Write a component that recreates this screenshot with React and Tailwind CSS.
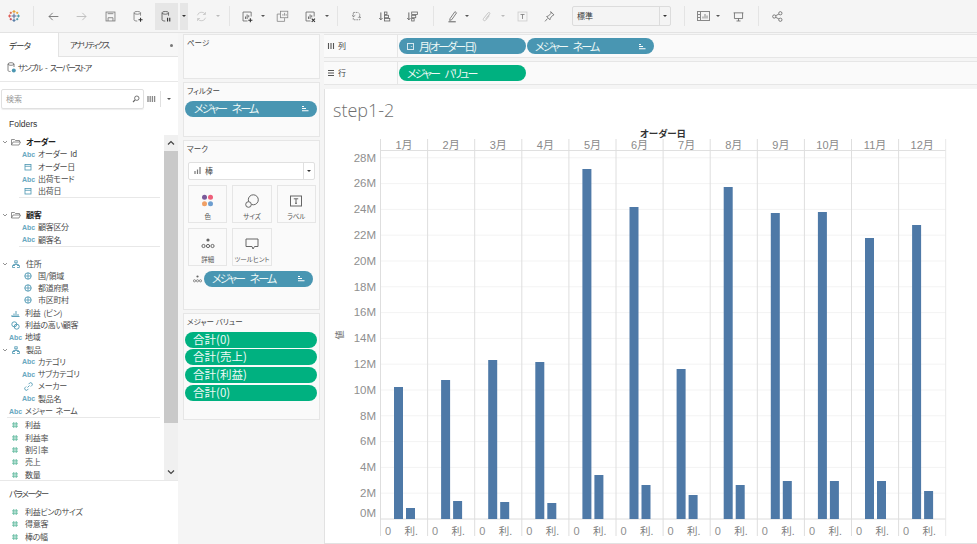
import React from "react";

const JP = "font-['Noto_Sans_CJK_JP','Liberation_Sans',sans-serif] [font-feature-settings:'palt']";

const S = ({ w, h, children }) => (
  <svg
    width={w || 13}
    height={h || 13}
    viewBox={`0 0 ${w || 16} ${h || 16}`}
    fill="none"
    stroke="currentColor"
    strokeWidth="1"
    className="shrink-0"
  >
    {children}
  </svg>
);

function Logo() {
  const cross = (x, y, r, c, k) => (
    <path key={k} d={`M${x - r} ${y}H${x + r}M${x} ${y - r}V${y + r}`} stroke={c} strokeWidth="1.1" />
  );
  return (
    <S w={12} h={12}>
      {cross(6, 6, 2.4, "#5b6f9a", 0)}
      {cross(6, 1.6, 1.5, "#e8a33b", 1)}
      {cross(6, 10.4, 1.5, "#5b7fa8", 2)}
      {cross(1.6, 6, 1.5, "#e0574f", 3)}
      {cross(10.4, 6, 1.5, "#4e9aa8", 4)}
      {cross(2.8, 2.8, 1.1, "#d9694f", 5)}
      {cross(9.2, 2.8, 1.1, "#e8a33b", 6)}
      {cross(2.8, 9.2, 1.1, "#c34b5e", 7)}
      {cross(9.2, 9.2, 1.1, "#4e9aa8", 8)}
    </S>
  );
}

const Cyl = ({ children }) => (
  <S>
    <ellipse cx="6.5" cy="3.5" rx="4" ry="1.7" />
    <path d="M2.5 3.5V12c0 1 1.6 1.6 4 1.6M10.5 3.5V7" />
    {children}
  </S>
);
const SheetBars = ({ children }) => (
  <S>
    <path d="M2.5 2.5H12.5V8M2.5 2.5V13.5H8" />
    <path d="M5.5 11V8M7.5 11V5.5M9.5 9V6.5" strokeWidth="1.2" />
    {children}
  </S>
);

const Dd = ({ c = "text-[#555]" }) => <span className={`block h-0 w-0 border-x-[2px] border-t-[2.5px] border-x-transparent border-t-current ${c}`} />;

const T = ({ className, children }) => <div className={`flex h-full shrink-0 items-center justify-center ${className}`}>{children}</div>;
const Sep = ({ className }) => (
  <T className={className}>
    <span className="h-[20px] w-px bg-[#e4e4e4]" />
  </T>
);

function Toolbar() {
  return (
    <div className="flex h-[33px] shrink-0 items-center border-b border-[#e3e3e3] bg-[#f5f5f5] text-[#666]">
      <T className="w-[28px]"><Logo /></T>
      <Sep className="w-[11px]" />
      <T className="w-[28px]">
        <S><path d="M14 8H2.5M7 3.5 2.5 8 7 12.5" /></S>
      </T>
      <T className="w-[29px] text-[#b5b5b5]">
        <S><path d="M2 8h11.5M9 3.5 13.5 8 9 12.5" /></S>
      </T>
      <T className="w-[28px] text-[#777]">
        <S><rect x="2.5" y="2.5" width="11" height="11" /><path d="M5 13.5V9.5h6v4M4.5 4.5h7" /></S>
      </T>
      <T className="w-[28px] text-[#777]">
        <Cyl><path d="M10.5 9.5v5M8 12h5" stroke="#333" strokeWidth="1.3" /></Cyl>
      </T>
      <T className="w-[28px]">
        <div className="flex h-[27px] w-[23px] items-center justify-center bg-[#e6e6e6] text-[#555]">
          <Cyl><path d="M9.3 9.5v4.5M12 9.5v4.5" stroke="#333" strokeWidth="1.4" /></Cyl>
        </div>
      </T>
      <T className="w-[8px]">
        <div className="flex h-[27px] w-[8px] items-center justify-center bg-[#e6e6e6]"><Dd c="text-[#333]" /></div>
      </T>
      <T className="w-[26px] text-[#c4c4c4]">
        <S><path d="M3 6.5a5.3 5.3 0 0 1 9.6-1.3M13 9.5a5.3 5.3 0 0 1-9.6 1.3M12.8 2.5v3h-3M3.2 13.5v-3h3" /></S>
      </T>
      <T className="w-[8px]"><Dd c="text-[#bbb]" /></T>
      <Sep className="w-[14px]" />
      <T className="w-[22px]">
        <SheetBars><path d="M11.5 10v5M9 12.5h5" stroke="#333" strokeWidth="1.3" /></SheetBars>
      </T>
      <T className="w-[10px]"><Dd /></T>
      <T className="w-[28px] text-[#888]">
        <S><rect x="5.5" y="1.5" width="9" height="8" /><path d="M5.5 5H1.5v9h9v-4" /><path d="M8.5 7V5M10.5 7V3.5M12.5 7V5" /></S>
      </T>
      <T className="w-[28px]">
        <SheetBars><path d="m9.5 10.5 4 4M13.5 10.5l-4 4" stroke="#333" strokeWidth="1.3" /></SheetBars>
      </T>
      <T className="w-[6px]"><Dd /></T>
      <Sep className="w-[14px]" />
      <T className="w-[24px] text-[#777]">
        <S><path d="M4 3H10l2 2v7H4z" strokeDasharray="2 1" /><path d="M2.5 6.5 4.5 8l2-1.5M13.5 9.5l-2-1.5-1.5 1.5" /></S>
      </T>
      <T className="w-[32px]">
        <S><path d="M3.5 3v9M1.5 10l2 2 2-2" strokeWidth="1.2" /><rect x="8" y="2.5" width="3" height="3" /><rect x="8" y="6.5" width="5" height="3" /><rect x="8" y="10.5" width="6.5" height="3" /></S>
      </T>
      <T className="w-[24px]">
        <S><path d="M3.5 3v9M1.5 10l2 2 2-2" strokeWidth="1.2" /><rect x="7" y="2.5" width="7" height="3" /><rect x="7" y="6.5" width="5" height="3" /><rect x="7" y="10.5" width="3" height="3" /></S>
      </T>
      <Sep className="w-[18px]" />
      <T className="w-[20px]">
        <S><path d="M5 10.5 11 2l2 1.5-6 8.5-2.5.8z" /><path d="M3 14.5h9" strokeWidth="1.3" /></S>
      </T>
      <T className="w-[10px]"><Dd /></T>
      <T className="w-[28px] text-[#c4c4c4]">
        <S><path d="M11.5 7 7 12.5c-1.5 1.7-4 0-2.700-2L10 3.5c1-1.200 2.800 0 2 1.300L7 11" strokeWidth="1.2" /></S>
      </T>
      <T className="w-[6px]"><Dd c="text-[#bbb]" /></T>
      <T className="w-[32px] text-[#777]">
        <S><rect x="2.5" y="2.5" width="11" height="11" stroke="#ccc" /><path d="M5.5 5.500h5M8 5.500v5.500" /></S>
      </T>
      <T className="w-[22px]">
        <S><path d="M9.5 2 13.5 6l-1.500.5L9 10l-.5 2-4-4 2-.5L10 4z" /><path d="m5.500 10.500-3 3.500" /></S>
      </T>
      <div className="ml-[12px] flex h-[20px] w-[99px] shrink-0 items-center rounded-[2px] border border-[#dcdcdc] bg-[#f4f4f4]">
        <span className={`flex-1 pl-[4px] text-[8px] text-[#333] ${JP}`}>標準</span>
        <span className="flex h-full w-[11px] items-center justify-center border-l border-[#dcdcdc]"><Dd c="text-[#333]" /></span>
      </div>
      <Sep className="w-[26px]" />
      <T className="w-[12px] text-[#888]">
        <S w={13} h={10}><rect x=".5" y=".5" width="12" height="9" /><path d="M3.5.5v9M.5 3.5h3M.5 6.5h3M6 7.5V5.500M8 7.500V3M10 7.500V4.500" /></S>
      </T>
      <T className="w-[18px]"><Dd /></T>
      <T className="w-[22px]">
        <S><path d="M2 3.5h12M3 3.5v7h10v-7M8 10.500v3M5.500 13.500h5" /></S>
      </T>
      <Sep className="w-[18px]" />
      <T className="w-[20px]">
        <S><circle cx="4" cy="8" r="2" /><circle cx="11.500" cy="4" r="2" /><circle cx="11.500" cy="12" r="2" /><path d="m5.800 7 3.900-2M5.800 9l3.900 2" /></S>
      </T>
    </div>
  );
}

const Abc = () => <span className="w-[12px] text-center font-['Liberation_Sans',sans-serif] text-[7px] font-bold leading-none text-[#6aa8bf]">Abc</span>;
const Cal = () => (
  <span className="flex w-[12px] justify-center text-[#4b96b1]">
    <S w={8} h={8}><rect x="1" y="1.5" width="6" height="5.5" strokeWidth=".8" /><path d="M1 3.300h6" strokeWidth=".8" /></S>
  </span>
);
const Globe = () => (
  <span className="flex w-[12px] justify-center text-[#4b96b1]">
    <S w={8} h={8}><circle cx="4" cy="4" r="3.2" strokeWidth=".9" /><path d="M.8 4h6.400M4 .8v6.400" strokeWidth=".8" /></S>
  </span>
);
const Hash = () => (
  <span className="flex w-[12px] justify-center text-[#5cb89c]">
    <S w={8} h={8}><path d="M2.800 1v6M5.200 1v6M1 2.900h6M1 5.200h6" strokeWidth=".9" /></S>
  </span>
);
const Hier = () => (
  <span className="flex w-[12px] justify-center text-[#4b96b1]">
    <S w={8} h={8}><rect x="2.8" y=".8" width="2.4" height="2" strokeWidth=".8" /><path d="M4 3v1.500M1.500 6V4.500h5V6" strokeWidth=".8" /><rect x=".6" y="5.6" width="2" height="1.8" strokeWidth=".8" /><rect x="5.4" y="5.6" width="2" height="1.8" strokeWidth=".8" /></S>
  </span>
);
const Folder = () => (
  <span className="flex w-[12px] justify-center text-[#777]">
    <S w={10} h={8}><path d="M.5 7V1.500h3l1 1h4V4M.5 7l1.500-3h7.500L8 7z" strokeWidth=".8" /></S>
  </span>
);
const Hist = () => (
  <span className="flex w-[12px] justify-center text-[#4b96b1]">
    <S w={9} h={8}><path d="M1 7V6M3 7V4.500M5 7V2M7 7V5M.5 7.500h8" strokeWidth=".9" /></S>
  </span>
);
const Venn = () => (
  <span className="flex w-[12px] justify-center text-[#4b96b1]">
    <S w={9} h={9}><circle cx="3.3" cy="3.3" r="2.5" strokeWidth=".9" /><circle cx="5.7" cy="5.7" r="2.5" strokeWidth=".9" /></S>
  </span>
);
const LinkI = () => (
  <span className="flex w-[12px] justify-center text-[#4b96b1]">
    <S w={9} h={9}><path d="M3.500 5.500 5.500 3.500M4.500 2.200l1-1a1.600 1.600 0 0 1 2.300 2.300l-1 1M4.500 6.800l-1 1a1.600 1.600 0 0 1-2.300-2.300l1-1" strokeWidth=".9" /></S>
  </span>
);

const Row = ({ level = 1, chev, icon, bold, children }) => (
  <div className={`flex h-[12.3px] items-center ${level === 1 ? "pl-[22px]" : chev ? "pl-[2px]" : "pl-[9px]"}`}>
    {chev && (
      <span className="mr-[1px] flex w-[6px] justify-center text-[#777]">
        <S w={6} h={6}><path d="m1 2 2 2 2-2" strokeWidth=".8" /></S>
      </span>
    )}
    {level !== 1 && chev ? <span className="w-[1px]" /> : null}
    {icon}
    <span className={`ml-[4px] whitespace-nowrap text-[8px] leading-none tracking-[-0.3px] [word-spacing:1.5px] ${bold ? "font-bold text-[#222]" : "text-[#4a4a4a]"} ${JP}`}>{children}</span>
  </div>
);

function Scrollbar() {
  return (
    <div className="flex w-[14px] shrink-0 flex-col bg-[#f0f0f0] text-[#444]">
      <div className="flex h-[16px] items-center justify-center">
        <S w={8} h={6}><path d="m1 4.500 3-3 3 3" strokeWidth="1.2" /></S>
      </div>
      <div className="h-[272px] bg-[#c9c9c9]" />
      <div className="flex flex-1 items-end justify-center pb-[5px]">
        <S w={8} h={6}><path d="m1 1.500 3 3 3-3" strokeWidth="1.2" /></S>
      </div>
    </div>
  );
}

function DataPane() {
  return (
    <div className="flex h-full w-[178px] shrink-0 flex-col bg-white">
      <div className="flex h-[24px] shrink-0">
        <div className={`flex w-[59px] items-center border-r border-[#e3e3e3] pl-[9px] pt-[1px] text-[8.5px] tracking-[-0.9px] text-[#333] ${JP}`}>データ</div>
        <div className={`flex flex-1 items-center justify-between border-b border-[#e3e3e3] bg-[#f7f7f7] pl-[11px] pr-[5px] pt-[1px] text-[8px] tracking-[-1.4px] text-[#444] ${JP}`}>
          <span>アナリティクス</span>
          <span className="h-[3px] w-[3px] rounded-full bg-[#777]" />
        </div>
      </div>
      <div className="flex h-[25px] shrink-0 items-center border-b border-[#e8e8e8] pb-[3px] pl-[7px] text-[#666]">
        <S w={9} h={11}><ellipse cx="4" cy="2" rx="3" ry="1.3" strokeWidth=".8" /><path d="M1 2v6.500c0 .6 1 1 2.500 1M7 2v3" strokeWidth=".8" /><circle cx="6.8" cy="8.5" r="2" fill="#4b96b1" stroke="none" /></S>
        <span className={`ml-[2px] text-[8px] tracking-[-1.4px] [word-spacing:3px] text-[#444] ${JP}`}>サンプル - スーパーストア</span>
      </div>
      <div className="flex h-[32px] shrink-0 items-center pl-[1px] pt-[2px]">
        <div className="flex h-[20px] w-[143px] items-center justify-between rounded-[2px] border border-[#e0e0e0] pl-[4px] pr-[3px] shadow-[0_1px_1px_#eee]">
          <span className={`text-[8px] text-[#999] ${JP}`}>検索</span>
          <span className="text-[#666]">
            <S w={8} h={8}><circle cx="4.8" cy="3.2" r="2.2" strokeWidth=".9" /><path d="M3 5 1 7" strokeWidth="1.1" /></S>
          </span>
        </div>
        <span className="ml-[3px] text-[#888]">
          <S w={9} h={8}><path d="M1 1v6M3.2 1v6M5.4 1v6M7.6 1v6" strokeWidth="1.3" /></S>
        </span>
        <span className="ml-[4px] h-[16px] w-px bg-[#e0e0e0]" />
        <span className="ml-[6px]"><Dd c="text-[#555]" /></span>
      </div>
      <div className="flex h-[21px] shrink-0 items-center pl-[9px] font-['Liberation_Sans',sans-serif] text-[8.5px] text-[#333]">Folders</div>
      <div className="flex h-[345px] shrink-0">
        <div className="min-w-0 flex-1 pt-[1px]">
          <Row level={0} chev icon={<Folder />} bold>オーダー</Row>
          <Row icon={<Abc />}>オーダー Id</Row>
          <Row icon={<Cal />}>オーダー日</Row>
          <Row icon={<Abc />}>出荷モード</Row>
          <Row icon={<Cal />}>出荷日</Row>
          <div className="mb-[10.5px] ml-[19px] mr-[4px] h-px bg-[#e8e8e8]" />
          <Row level={0} chev icon={<Folder />} bold>顧客</Row>
          <Row icon={<Abc />}>顧客区分</Row>
          <Row icon={<Abc />}>顧客名</Row>
          <div className="mb-[10.5px] ml-[19px] mr-[4px] h-px bg-[#e8e8e8]" />
          <Row level={0} chev icon={<Hier />}>住所</Row>
          <Row icon={<Globe />}>国/領域</Row>
          <Row icon={<Globe />}>都道府県</Row>
          <Row icon={<Globe />}>市区町村</Row>
          <Row level={0} icon={<Hist />}>利益 (ビン)</Row>
          <Row level={0} icon={<Venn />}>利益の高い顧客</Row>
          <Row level={0} icon={<Abc />}>地域</Row>
          <Row level={0} chev icon={<Hier />}>製品</Row>
          <Row icon={<Abc />}>カテゴリ</Row>
          <Row icon={<Abc />}>サブカテゴリ</Row>
          <Row icon={<LinkI />}>メーカー</Row>
          <Row icon={<Abc />}>製品名</Row>
          <Row level={0} icon={<Abc />}>メジャー ネーム</Row>
          <div className="ml-[7px] mr-[4px] h-px bg-[#e8e8e8]" />
          <div className="h-[1px]" />
          <Row level={0} icon={<Hash />}>利益</Row>
          <Row level={0} icon={<Hash />}>利益率</Row>
          <Row level={0} icon={<Hash />}>割引率</Row>
          <Row level={0} icon={<Hash />}>売上</Row>
          <Row level={0} icon={<Hash />}>数量</Row>
        </div>
        <Scrollbar />
      </div>
      <div className="flex-1 border-t border-[#e8e8e8]">
        <div className={`flex h-[24px] items-center pl-[9px] text-[8.5px] tracking-[-1.3px] text-[#444] ${JP}`}>パラメーター</div>
        <div className="pt-[1px]">
          <Row level={0} icon={<Hash />}>利益ビンのサイズ</Row>
          <Row level={0} icon={<Hash />}>得意客</Row>
          <Row level={0} icon={<Hash />}>棒の幅</Row>
        </div>
      </div>
    </div>
  );
}

const SortI = () => (
  <S w={8} h={7}><path d="M1 1.500h2M1 3.500h4M1 5.800h6.500" stroke="#fff" strokeWidth="1.1" /></S>
);

const Pill = ({ className = "", green, sort, pre, tight, children }) => (
  <div className={`flex h-[16px] shrink-0 items-center justify-between rounded-full pr-[8px] leading-none text-[#eef9f6] ${tight ? "text-[11px] tracking-[-1.9px] [word-spacing:5px]" : "text-[11.5px]"} ${green ? "bg-[#00b180]" : "bg-[#4996b2]"} ${className} ${JP}`}>
    <span className="flex items-center whitespace-nowrap">{pre}{children}</span>
    {sort && <SortI />}
  </div>
);

const Card = ({ title, className, children }) => (
  <div className={`shrink-0 border border-[#e6e6e6] bg-[#fafafa] ${className}`}>
    <div className={`pl-[3px] text-[7.5px] leading-none text-[#444] ${JP}`}>{title}</div>
    {children}
  </div>
);

const MarkBtn = ({ label, children }) => (
  <div className="flex h-[38px] flex-col items-center border border-[#e6e6e6] pt-[6px]">
    <div className="flex h-[18px] items-center justify-center text-[#666]">{children}</div>
    <div className={`mt-auto pb-[2px] text-[6.5px] leading-none text-[#555] ${JP}`}>{label}</div>
  </div>
);

function Cards() {
  return (
    <div className="flex h-full w-[146px] shrink-0 flex-col gap-[3px] bg-[#f5f5f5] pl-[5px] pt-[1px]">
      <Card title="ページ" className="h-[45px] w-[137px] pt-[4px]" />
      <Card title="フィルター" className="h-[55px] w-[137px] pt-[4px]">
        <Pill sort tight className="ml-[1px] mt-[6px] w-[132px] pl-[9px]">メジャー ネーム</Pill>
      </Card>
      <Card title="マーク" className="h-[170px] w-[137px] pt-[4px]">
        <div className="mx-[4px] mt-[9px] flex h-[18px] w-[127px] items-center rounded-[2px] border border-[#e0e0e0] bg-white">
          <span className="ml-[5px] text-[#777]">
            <S w={8} h={7}><path d="M1 7V4M3.500 7V2.500M6 7V0" strokeWidth="1.2" /></S>
          </span>
          <span className={`ml-[3px] flex-1 text-[8px] text-[#444] ${JP}`}>棒</span>
          <span className="flex h-full w-[11px] items-center justify-center border-l border-[#e0e0e0]"><Dd c="text-[#333]" /></span>
        </div>
        <div className="mx-[4px] mt-[5px] grid w-[128px] grid-cols-3 gap-x-[5px] gap-y-[5px]">
          <MarkBtn label="色">
            <svg width="13" height="13" viewBox="0 0 13 13">
              <circle cx="3.5" cy="3.3" r="2.5" fill="#7a5a9a" />
              <circle cx="9.5" cy="3.3" r="2.5" fill="#ee5f7a" />
              <circle cx="3.5" cy="9.7" r="2.5" fill="#f0a066" />
              <circle cx="9.5" cy="9.7" r="2.5" fill="#6d9ed0" />
            </svg>
          </MarkBtn>
          <MarkBtn label="サイズ">
            <S w={14} h={14}><circle cx="8.3" cy="5.8" r="5" /><circle cx="3.5" cy="10.5" r="2.8" fill="#fafafa" /></S>
          </MarkBtn>
          <MarkBtn label="ラベル">
            <S w={14} h={14}><rect x="1.5" y="2" width="11" height="10" /><path d="M4.800 4.800h4.400M7 4.800v4.500M6 9.300h2" /></S>
          </MarkBtn>
          <MarkBtn label="詳細">
            <S w={14} h={13}><circle cx="7" cy="3" r="1.6" fill="currentColor" stroke="none" /><circle cx="2.5" cy="9" r="1.6" /><circle cx="7" cy="9" r="1.6" /><circle cx="11.5" cy="9" r="1.6" /></S>
          </MarkBtn>
          <MarkBtn label="ツールヒント">
            <S w={14} h={14}><path d="M1 2h12v7.500H9.500L8 12 7 9.500H1z" /></S>
          </MarkBtn>
        </div>
        <div className="mt-[5px] flex items-center pl-[9px]">
          <span className="text-[#666]">
            <S w={9} h={8}><circle cx="4.5" cy="1.5" r="1.1" fill="currentColor" stroke="none" /><circle cx="1.5" cy="5.8" r="1.1" strokeWidth=".7" /><circle cx="4.5" cy="5.8" r="1.1" strokeWidth=".7" /><circle cx="7.5" cy="5.8" r="1.1" strokeWidth=".7" /></S>
          </span>
          <Pill sort tight className="ml-[2px] w-[109px] pl-[8px]">メジャー ネーム</Pill>
        </div>
      </Card>
      <Card title="メジャー バリュー" className="h-[107px] w-[137px] pt-[4px]">
        <div className="ml-[1px] mt-[6px] flex w-[132px] flex-col gap-[1.7px]">
          <Pill green className="pl-[8px]">合計(0)</Pill>
          <Pill green className="pl-[8px]">合計(売上)</Pill>
          <Pill green className="pl-[8px]">合計(利益)</Pill>
          <Pill green className="pl-[8px]">合計(0)</Pill>
        </div>
      </Card>
    </div>
  );
}

const tops = [
  [387, 508], [380, 501], [360, 502], [362, 503], [169, 475], [207, 485],
  [369, 495], [187, 485], [213, 481], [212, 481], [238, 481], [225, 491],
];
const yLabels = ["28M", "26M", "24M", "22M", "20M", "18M", "16M", "14M", "12M", "10M", "8M", "6M", "4M", "2M"];
const X0 = 380.5;
const W = 47.1;
const BASE = 519;
const STEP = 12.9;

function Chart() {
  const fam = "'Liberation Sans','Noto Sans CJK JP',sans-serif";
  return (
    <svg width="652" height="419" className="block shrink-0">
      <g transform="translate(-325,-124)" fontFamily={fam}>
        <text x="663" y="137" textAnchor="middle" fontSize="9.5" fontWeight="700" fill="#333" fontFamily="'Noto Sans CJK JP',sans-serif" style={{ fontFeatureSettings: "'palt'" }}>オーダー日</text>
        {Array.from({ length: 15 }).map((_, i) => {
          const y = BASE - (i * 2 * STEP);
          return <line key={i} x1={X0} x2={946} y1={y} y2={y} stroke={i === 0 ? "#dcdcdc" : "#f3f3f3"} />;
        })}
        <line x1={X0} x2={946} y1="150.5" y2="150.5" stroke="#e0e0e0" />
        {Array.from({ length: 13 }).map((_, i) => {
          const x = X0 + i * W;
          return <line key={i} x1={x} x2={x} y1="139" y2="536" stroke={i === 12 ? "#e8e8e8" : "#dedede"} />;
        })}
        {tops.map((t, i) => {
          const x = X0 + i * W;
          return (
            <g key={i}>
              <text x={x + W / 2} y="149" textAnchor="middle" fontSize="11" fill="#8a8a8a" fontFamily={fam}>{i + 1}月</text>
              <rect x={x + 13.5} y={t[0]} width="9" height={BASE - t[0]} fill="#4e79a7" />
              <rect x={x + 25.5} y={t[1]} width="9" height={BASE - t[1]} fill="#4e79a7" />
              <text x={x + 4.5} y="535" fontSize="11" fill="#8f8f8f">0</text>
              <text x={x + 24} y="535" fontSize="10.5" fill="#7d7d7d">利.</text>
            </g>
          );
        })}
        {yLabels.map((l, i) => (
          <text key={l} x="376" y={161.5 + i * 25.8} textAnchor="end" fontSize="11.5" fill="#8f8f8f">{l}</text>
        ))}
        <text x="376" y="517" textAnchor="end" fontSize="11.5" fill="#8f8f8f">0M</text>
        <text transform="translate(343,335) rotate(-90)" textAnchor="middle" fontSize="9" fill="#666" fontFamily="'Noto Sans CJK JP',sans-serif">値</text>
      </g>
    </svg>
  );
}

const Shelf = ({ icon, label, children }) => (
  <div className="flex h-[24px] items-center border-y border-[#e6e6e6] bg-[#fafafa]">
    <div className="flex h-full w-[74px] shrink-0 items-center border-r border-[#e6e6e6] pl-[3px] text-[#555]">
      {icon}
      <span className={`ml-[3px] text-[8px] text-[#444] ${JP}`}>{label}</span>
    </div>
    <div className="flex gap-[1px] pl-[1px]">{children}</div>
  </div>
);

function Main() {
  return (
    <div className="flex h-full min-w-0 flex-1 flex-col bg-[#f5f5f5]">
      <div className="flex shrink-0 flex-col gap-[3px] pt-[1px]">
        <Shelf
          label="列"
          icon={<S w={8} h={8}><path d="M1.500 1v6M4 1v6M6.500 1v6" strokeWidth="1.1" /></S>}
        >
          <Pill tight className="w-[127px] pl-[8px]" pre={<span className="mr-[5px] flex h-[7px] w-[7px] items-center justify-center border border-[#d5e8ef] text-[7px] leading-none">·</span>}>月(オーダー日)</Pill>
          <Pill sort tight className="w-[127px] pl-[8px]">メジャー ネーム</Pill>
        </Shelf>
        <Shelf
          label="行"
          icon={<S w={8} h={8}><path d="M1 1.500h6M1 4h6M1 6.500h6" strokeWidth="1.1" /></S>}
        >
          <Pill green tight className="w-[127px] pl-[8px]">メジャー バリュー</Pill>
        </Shelf>
      </div>
      <div className="mt-[4px] flex flex-1 flex-col border-b border-l border-[#e2e2e2] bg-white">
        <div className="flex h-[35px] shrink-0 items-center pl-[8px] pt-[7px] font-['Open_Sans',sans-serif] text-[18px] font-light text-[#6f6f6f]">step1-2</div>
        <Chart />
      </div>
    </div>
  );
}

export default function App() {
  return (
    <div className="flex h-[544px] w-[977px] flex-col overflow-hidden bg-[#f5f5f5] font-['Liberation_Sans',sans-serif]">
      <Toolbar />
      <div className="flex min-h-0 flex-1">
        <DataPane />
        <Cards />
        <Main />
      </div>
    </div>
  );
}
